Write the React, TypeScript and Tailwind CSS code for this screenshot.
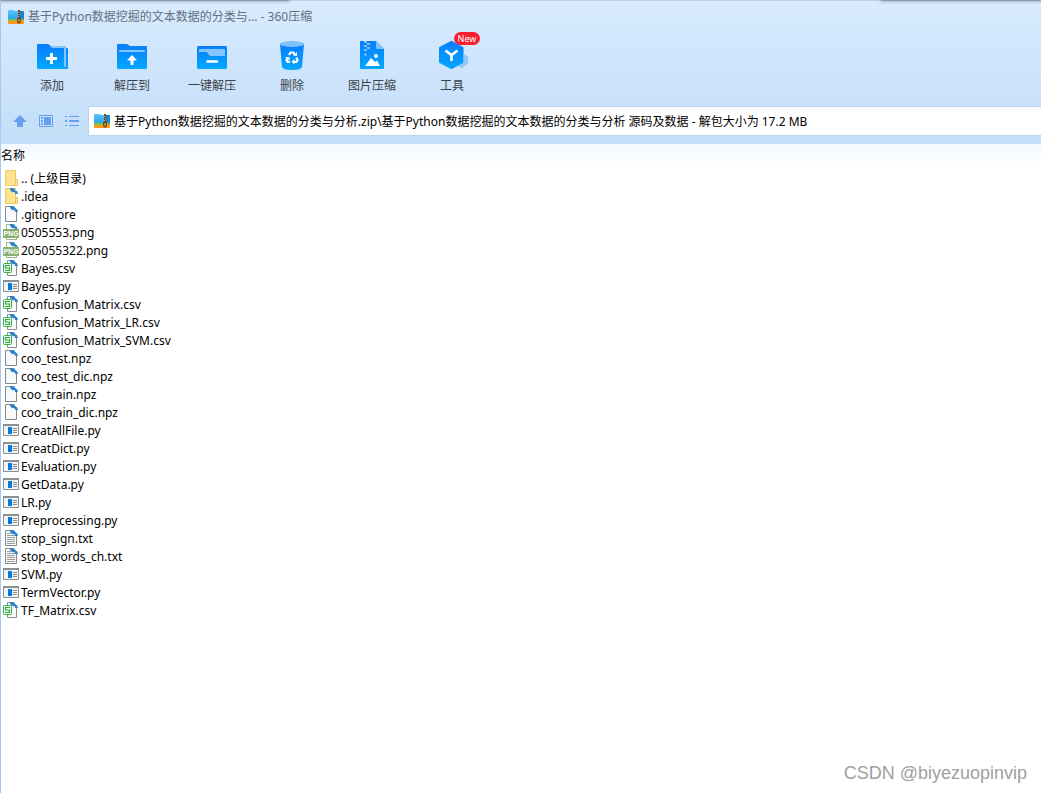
import React from 'react';

type FileKind = 'up' | 'folder' | 'blank' | 'png' | 'csv' | 'py' | 'txt';

interface ArchiveEntry {
  name: string;
  kind: FileKind;
}

const ENTRIES: ArchiveEntry[] = [
  { name: '.. (上级目录)', kind: 'up' },
  { name: '.idea', kind: 'folder' },
  { name: '.gitignore', kind: 'blank' },
  { name: '0505553.png', kind: 'png' },
  { name: '205055322.png', kind: 'png' },
  { name: 'Bayes.csv', kind: 'csv' },
  { name: 'Bayes.py', kind: 'py' },
  { name: 'Confusion_Matrix.csv', kind: 'csv' },
  { name: 'Confusion_Matrix_LR.csv', kind: 'csv' },
  { name: 'Confusion_Matrix_SVM.csv', kind: 'csv' },
  { name: 'coo_test.npz', kind: 'blank' },
  { name: 'coo_test_dic.npz', kind: 'blank' },
  { name: 'coo_train.npz', kind: 'blank' },
  { name: 'coo_train_dic.npz', kind: 'blank' },
  { name: 'CreatAllFile.py', kind: 'py' },
  { name: 'CreatDict.py', kind: 'py' },
  { name: 'Evaluation.py', kind: 'py' },
  { name: 'GetData.py', kind: 'py' },
  { name: 'LR.py', kind: 'py' },
  { name: 'Preprocessing.py', kind: 'py' },
  { name: 'stop_sign.txt', kind: 'txt' },
  { name: 'stop_words_ch.txt', kind: 'txt' },
  { name: 'SVM.py', kind: 'py' },
  { name: 'TermVector.py', kind: 'py' },
  { name: 'TF_Matrix.csv', kind: 'csv' },
];

const ArchiveIcon: React.FC = () => (
  <svg className="size-4 shrink-0" viewBox="0 0 16 16" aria-hidden="true">
    <defs>
      <linearGradient id="archiveBlue" x1="0" y1="0" x2="0" y2="1">
        <stop offset="0" stopColor="#5cc6fa" />
        <stop offset="1" stopColor="#22a2ee" />
      </linearGradient>
    </defs>
    <path d="M0 2q0-1 1-1h5l1 1h8q1 0 1 1v8H0z" fill="url(#archiveBlue)" />
    <path d="M12 2h3q1 0 1 1v8h-4z" fill="#1a83cc" />
    <path d="M0 10h16v2H0z" fill="#7cc243" />
    <path d="M0 12h16v2q0 1-1 1H1q-1 0-1-1z" fill="#ff9d18" />
    <path d="M10 1h2v9h-2z" fill="#5f4a3c" />
    <path d="M10 3h1v1h-1zM11 5h1v1h-1zM10 7h1v1h-1z" fill="#c9b08a" />
    <path d="M9 9h4v4l-1 1.500h-2L9 13z" fill="#8a4314" />
    <path d="M10.500 10.500h1v2h-1z" fill="#ffe3b0" />
  </svg>
);

// Shared vertical blue used by every toolbar drawing
const BlueGradient: React.FC = () => (
  <defs>
    <linearGradient id="toolBlue" x1="0" y1="0" x2="0" y2="1">
      <stop offset="0" stopColor="#087dfc" />
      <stop offset="1" stopColor="#02a8ff" />
    </linearGradient>
  </defs>
);

const AddIcon: React.FC = () => (
  <svg className="size-8" viewBox="0 0 32 32" aria-hidden="true">
    <BlueGradient />
    <path d="M1 5q0-1 1-1h10l3 2h15v2q2 0 2 1v19q0 1-1 1H2q-1 0-1-1z" fill="url(#toolBlue)" />
    <path d="M14 6h15q1 0 1 1v20h-2V9q0-1-1-1H16z" fill="#83c5ff" />
    <path d="M10 18.500h11M15.500 13v11" stroke="#fff" strokeWidth="3" />
  </svg>
);

const ExtractIcon: React.FC = () => (
  <svg className="size-8" viewBox="0 0 32 32" aria-hidden="true">
    <path d="M1 5q0-1 1-1h9l3 2h16q1 0 1 1v21q0 1-1 1H2q-1 0-1-1z" fill="url(#toolBlue)" />
    <path d="M3 12v-1q0-1 1-1h24q1 0 1 1v1z" fill="#83c5ff" />
    <path d="m16 15 5 5.500h-3.500V25h-3v-4.500H11z" fill="#fff" />
  </svg>
);

const OneKeyIcon: React.FC = () => (
  <svg className="size-8" viewBox="0 0 32 32" aria-hidden="true">
    <rect x="1" y="6" width="30" height="23" rx="1.500" fill="url(#toolBlue)" />
    <path d="M3 12v-2q0-1 1-1h24q1 0 1 1v6H15q-1 0-2-1l-2.500-3z" fill="#83c5ff" />
    <path d="M11.500 21.500h9.500" stroke="#fff" strokeWidth="2.600" strokeLinecap="round" />
  </svg>
);

const TrashIcon: React.FC = () => (
  <svg className="size-8" viewBox="0 0 32 32" aria-hidden="true">
    <path d="M4 4h24l-2 23q-1 3-10 3T6 27z" fill="url(#toolBlue)" />
    <ellipse cx="16" cy="4" rx="12" ry="3" fill="#7fc1fb" />
    <g fill="none" stroke="#fff" strokeWidth="2.200">
      <path d="m13 15 1.500-2.500h3l1.500 2.500M20.500 17.500l1 2.500-1 2H17.500M14 22h-2.500l-1-2 1.500-2.500" />
    </g>
    <path d="m17 15.500 4 .5V12zM18.500 19v5.500l-3-2.700zM9 17h4.500v4z" fill="#fff" />
  </svg>
);

const PictureIcon: React.FC = () => (
  <svg className="size-8" viewBox="0 0 32 32" aria-hidden="true">
    <path d="M4 2q0-1 1-1h15l8 8v19q0 1-1 1H5q-1 0-1-1z" fill="url(#toolBlue)" />
    <path d="M20 1v7q0 1 1 1h7z" fill="#83c5ff" />
    <path d="M8 1h3v2H8zM11 3h3v2h-3zM8 5h3v2H8zM11 7h3v2h-3zM8 9h3v2H8z" fill="#7bc3ff" />
    <circle cx="9.500" cy="14.500" r="1.500" fill="#63b9ff" />
    <circle cx="20" cy="16" r="2" fill="#fff" />
    <path d="m9 26 6-8 4 4 2-1.500 3 5.500z" fill="#fff" />
  </svg>
);

const ToolsIcon: React.FC = () => (
  <svg className="size-8" viewBox="0 0 32 32" aria-hidden="true">
    <path d="m28 14 4 2.500v7L26 28l-4-2 6-4z" fill="#8cc8fb" />
    <path d="M15 1q.5-.3 1 0l11 6q.5.300.5 1v14q0 .7-.5 1l-11 6q-.5.300-1 0L3.500 23q-.5-.3-.5-1V8q0-.7.5-1z" fill="url(#toolBlue)" />
    <path d="m9.500 10.500 6 4.500 6-4.500M15.500 14.500V21" fill="none" stroke="#fff" strokeWidth="2.600" />
  </svg>
);

const TOOLS = [
  { label: '添加', Icon: AddIcon },
  { label: '解压到', Icon: ExtractIcon },
  { label: '一键解压', Icon: OneKeyIcon },
  { label: '删除', Icon: TrashIcon },
  { label: '图片压缩', Icon: PictureIcon },
  { label: '工具', Icon: ToolsIcon, badge: 'New' },
];

// Blue arrow curling over the top right corner of documents
const Corner: React.FC = () => (
  <>
    <path d="M7 0h3l2 1v3H9L7 2z" fill="#2f83cb" />
    <path d="M12 3h2l1 3h-3z" fill="#2f83cb" />
    <path d="M9 4h3v1h-2z" fill="#b9d8f2" />
  </>
);

const FileIcon: React.FC<{ kind: FileKind }> = ({ kind }) => (
  <svg className="size-4 shrink-0" viewBox="0 0 16 16" aria-hidden="true">
    {(kind === 'up' || kind === 'folder') && (
      <>
        <path d="M2.500.500h10v9h2v6h-12z" fill="#ffe391" stroke="#ecca62" />
        <path d="M12.500 9.500v6" stroke="#ecca62" />
        {kind === 'folder' && <Corner />}
      </>
    )}
    {(kind === 'blank' || kind === 'txt') && (
      <>
        <path d="M2.500.500h8l3 3v12h-11z" fill="#f8f9fa" stroke="#85898c" />
        {kind === 'txt' && (
          <path d="M4 3.500h4M4 5.500h8M4 7.500h8M4 9.500h8M4 11.500h8M4 13.500h8" stroke="#9a9da0" />
        )}
        <Corner />
      </>
    )}
    {kind === 'png' && (
      <>
        <path d="M3.500 5V.500h7l3 3V5M3.500 13v2.500h10V13" fill="#fff" stroke="#94b981" />
        <Corner />
        <rect y="5" width="16" height="9" rx="1" fill="#86b06f" />
        <text
          x="8"
          y="12"
          textAnchor="middle"
          fill="#fff"
          className="font-['Liberation_Sans',sans-serif] text-[7px] font-bold"
        >
          PNG
        </text>
      </>
    )}
    {kind === 'csv' && (
      <>
        <path d="M4.500.500h6l3 3v12h-9z" fill="#fafafa" stroke="#8a8e91" />
        <rect x=".5" y="3.500" width="8" height="9" rx="1" fill="#effaf0" stroke="#36ad46" />
        <path d="M7 5.500H2.500V8h4v2.500H2" fill="none" stroke="#2fa63f" strokeWidth="1.200" />
        <Corner />
      </>
    )}
    {kind === 'py' && (
      <>
        <path d="M.5 2.500h15v11H.5z" fill="#f3f3f3" stroke="#8c9092" />
        <path d="M0 2h16v2H0z" fill="#8c9092" />
        <path d="M5 5h4v7H5z" fill="#0879d8" />
        <path d="M10 6.500h4M10 8.500h4M10 10.500h4" stroke="#888c8f" />
      </>
    )}
  </svg>
);

const App: React.FC = () => {
  return (
    <div className="flex min-h-screen flex-col border-l border-[#a8c9ef] bg-white font-['Noto_Sans','Noto_Sans_CJK_SC',sans-serif] text-xs text-black">
      <header className="bg-linear-to-b from-[#d8ebff] to-[#c3def8]">
        <div className="flex h-px justify-between bg-[#b5d0ee]">
          <span className="w-72 bg-[#8c9bb0] shadow-[0_0_3px_1px_#a5b5c8]" />
          <span className="w-40 bg-[#8c9bb0] shadow-[0_0_3px_1px_#a5b5c8]" />
        </div>

        <div className="flex h-8 items-center gap-1 pl-[7px] text-[#65707c]">
          <ArchiveIcon />
          <h1 className="whitespace-pre">基于Python数据挖掘的文本数据的分类与... - 360压缩</h1>
        </div>

        <div className="flex h-[73px] pl-[11px]">
          {TOOLS.map(({ label, Icon, badge }) => (
            <button
              key={label}
              type="button"
              className="relative flex w-20 flex-col items-center gap-1 pt-[7px] text-[#3d4248]"
            >
              <Icon />
              <span className="leading-5">{label}</span>
              {badge && (
                <span className="absolute -top-px right-3 h-[13px] w-[26px] rounded-full bg-[#f8202d] text-center text-[9px] leading-[13px] text-white">
                  {badge}
                </span>
              )}
            </button>
          ))}
        </div>

        <div className="flex items-center pb-2">
          <nav className="flex w-[87px] gap-2.5 pl-[11px] text-[#65a0ef]">
            <button type="button" aria-label="上级目录">
              <svg className="size-4" viewBox="0 0 16 16" fill="currentColor">
                <path d="m8 2 7 7h-4v5H5V9H1z" />
              </svg>
            </button>
            <button type="button" aria-label="详细视图">
              <svg className="size-4" viewBox="0 0 16 16" fill="currentColor">
                <path d="M1.500 2.500h13v11h-13z" fill="none" stroke="currentColor" />
                <path d="M3 4h2v2H3zM3 7h2v2H3zM3 10h2v2H3zM6 4h7v8H6z" />
              </svg>
            </button>
            <button type="button" aria-label="列表视图">
              <svg className="size-4" viewBox="0 0 16 16" fill="currentColor">
                <path d="M1 3h2v1H1zM1 7h2v2H1zM1 12h2v1H1zM5 3h10v1H5zM5 7h10v2H5zM5 12h10v1H5z" />
              </svg>
            </button>
          </nav>
          <label className="flex h-[30px] flex-1 items-center gap-1 border border-r-0 border-[#b7d5f3] bg-white pl-[5px]">
            <ArchiveIcon />
            <input
              aria-label="路径"
              className="min-w-0 flex-1 pt-0.5 outline-none"
              defaultValue="基于Python数据挖掘的文本数据的分类与分析.zip\基于Python数据挖掘的文本数据的分类与分析 源码及数据 - 解包大小为 17.2 MB"
            />
          </label>
        </div>
      </header>

      <main className="flex-1">
        <table className="w-full border-collapse text-left">
          <thead className="bg-linear-to-b from-[#f3f9ff] to-white">
            <tr>
              <th className="h-[25px] p-0 pb-0.5 font-normal">名称</th>
            </tr>
          </thead>
          <tbody>
            {ENTRIES.map((entry) => (
              <tr key={entry.name}>
                <td className="p-0">
                  <div className="flex h-[18px] items-center gap-0.5 pl-0.5 whitespace-nowrap">
                    <FileIcon kind={entry.kind} />
                    <span className="pt-0.5">{entry.name}</span>
                  </div>
                </td>
              </tr>
            ))}
          </tbody>
        </table>
      </main>

      <footer className="flex justify-end pr-3.5 pb-1.5 font-['Liberation_Sans',sans-serif] text-lg text-[#a0a0a0]">
        CSDN @biyezuopinvip
      </footer>
    </div>
  );
};

export default App;
